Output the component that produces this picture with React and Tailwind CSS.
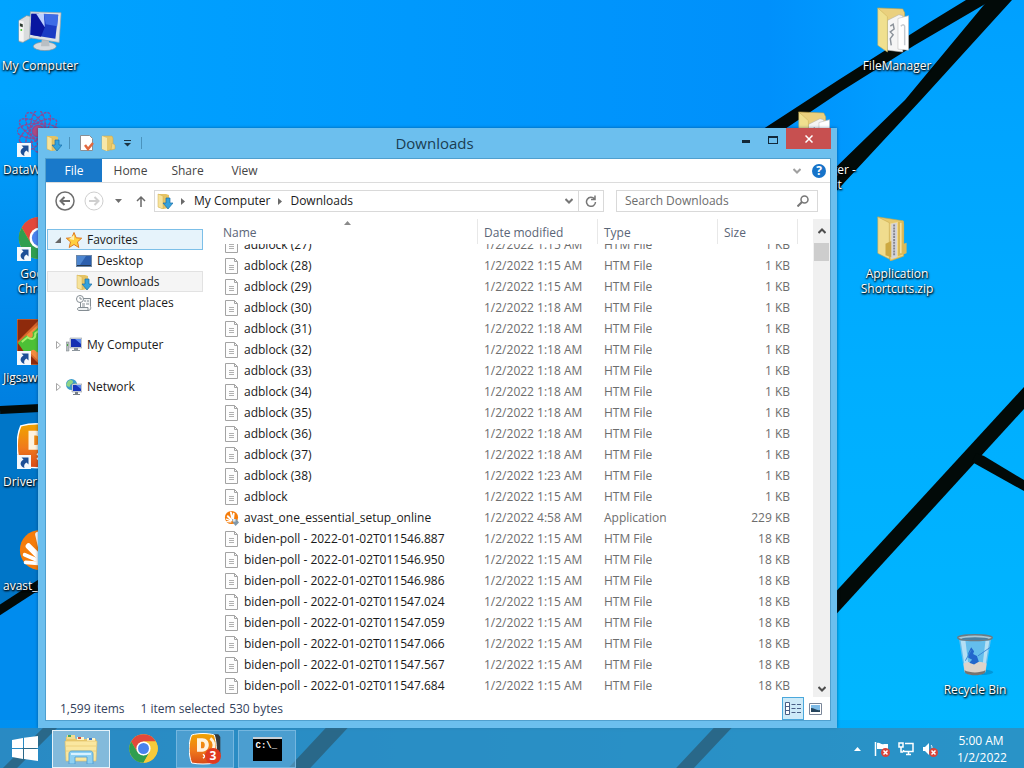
import { useEffect, useRef } from "react";

const adblockRows = [27, 28, 29, 30, 31, 32, 33, 34, 35, 36, 37, 38].map((n) => ({
  name: `adblock (${n})`,
  date: n < 30 ? "1/2/2022 1:15 AM" : n === 38 ? "1/2/2022 1:23 AM" : "1/2/2022 1:18 AM",
  type: "HTM File",
  size: "1 KB",
}));

const pollRows = [
  "546.887",
  "546.950",
  "546.986",
  "547.024",
  "547.059",
  "547.066",
  "547.567",
  "547.684",
].map((stamp) => ({
  name: `biden-poll - 2022-01-02T011${stamp}`,
  date: "1/2/2022 1:15 AM",
  type: "HTM File",
  size: "18 KB",
}));

const files = [
  ...adblockRows,
  { name: "adblock", date: "1/2/2022 1:15 AM", type: "HTM File", size: "1 KB" },
  {
    name: "avast_one_essential_setup_online",
    date: "1/2/2022 4:58 AM",
    type: "Application",
    size: "229 KB",
    app: true,
  },
  ...pollRows,
];

const Wallpaper = () => (
  <svg
    className="absolute inset-0 h-full w-full"
    viewBox="0 0 1024 768"
    preserveAspectRatio="none"
    aria-hidden="true"
  >
    <defs>
      <linearGradient id="sky" x1="0" y1="0" x2="1" y2="0">
        <stop offset="0" stopColor="#00a4ff" />
        <stop offset="0.4" stopColor="#0099fd" />
        <stop offset="0.75" stopColor="#0090fb" />
        <stop offset="0.86" stopColor="#009cff" />
        <stop offset="1" stopColor="#00a4ff" />
      </linearGradient>
      <linearGradient id="leftSide" x1="0" y1="0" x2="0" y2="1">
        <stop offset="0" stopColor="#00a0fe" />
        <stop offset="1" stopColor="#007fe0" />
      </linearGradient>
      <linearGradient id="rightSide" x1="0" y1="0" x2="0" y2="1">
        <stop offset="0" stopColor="#00a0ff" />
        <stop offset="0.5" stopColor="#00aeff" />
        <stop offset="1" stopColor="#00b8ff" />
      </linearGradient>
      <linearGradient id="bottomSide" x1="0" y1="0" x2="1" y2="0">
        <stop offset="0" stopColor="#0090f0" />
        <stop offset="1" stopColor="#00b4ff" />
      </linearGradient>
    </defs>
    <rect width="1024" height="768" fill="url(#sky)" />
    <rect y="100" width="60" height="310" fill="url(#leftSide)" />
    <polygon points="0,408 60,408 60,571 0,613" fill="#0076c8" />
    <polygon points="0,613 60,571 60,768 0,768" fill="#008cee" />
    <polygon points="1024,0 1008,0 830,190 830,768 1024,768" fill="url(#rightSide)" />
    <rect y="720" width="1024" height="48" fill="url(#bottomSide)" />
    <g fill="#020a08">
      <polygon points="760,131 840,79 930,22 966,0 992,0 915,45 840,92 782,131" />
      <polygon points="988,0 1012,0 921,100 830,198 830,173 905,100" />
      <polygon points="830,598 1024,387 1024,409 830,621" />
      <polygon points="976,453 984,456 1024,480 1024,491 972,462" />
    </g>
    <g stroke="#020a08" fill="none">
      <path d="M0 410 L60 407" strokeWidth="8" />
      <path d="M-5 613 L60 571" strokeWidth="9" />
      <path d="M0 778 L60 718" strokeWidth="10" />
      <path d="M290 778 L346 718" strokeWidth="16" />
      <path d="M670 784 L732 718" strokeWidth="13" />
    </g>
  </svg>
);

const ComputerIcon = ({ className }) => (
  <svg className={className} viewBox="0 0 48 48" aria-hidden="true">
    <path d="M2 14l8-5 5 1v22l-9 5-4-1z" fill="#d9dcdd" stroke="#8d9498" strokeWidth="0.7" />
    <path d="M2 14l5 1v21l-5-1z" fill="#f4f4f4" />
    <path d="M3 17l3 1v3l-3-1z" fill="#2d3a2f" />
    <circle cx="4.500" cy="24" r="1" fill="#49c42f" />
    <ellipse cx="29" cy="41" rx="12" ry="4.500" fill="#d7dbdf" stroke="#8d9498" strokeWidth="0.7" />
    <path d="M26 33h7l1 8h-9z" fill="#b9bfc4" />
    <path d="M14 5l32 1-2 31-31-5z" fill="#dfe3e6" stroke="#98a2a8" strokeWidth="0.7" />
    <path d="M15 7l28 1-3 25-26-4z" fill="#1a3cc4" />
    <path d="M15 7l8 0 6 14-4 10-11-2z" fill="#0916a0" />
    <path d="M20 7l8 0 1 14z" fill="#bcd0ff" />
    <path d="M28 7l15 1-1 12-12-2z" fill="#3d6ce6" />
  </svg>
);

const FolderIcon = ({ className, zip }) => (
  <svg className={className} viewBox="0 0 48 48" aria-hidden="true">
    {zip ? (
      <>
        <path d="M4 2l26 4 1 4v33l-14 5z" fill="#e6c96d" stroke="#c7a544" strokeWidth="0.6" />
        <path d="M16 9l14-3v36l-12 4z" fill="#f1dc93" />
        <path d="M18 9l6-1v36l-6 2z" fill="#d4d4da" />
        <path d="M21 10v32" stroke="#85858d" strokeWidth="2" strokeDasharray="2 1" />
        <path d="M25 7l6-1v24l3-1v11l-9 3z" fill="#dcb956" />
        <path d="M28 8v32" stroke="#f6e6a8" strokeWidth="1.500" />
        <path d="M4 2l12 6v38l-12-6z" fill="#f0dc8e" stroke="#c9aa50" strokeWidth="0.6" />
        <path d="M12 30l6-3v17l-6-2z" fill="#cda942" />
      </>
    ) : (
      <>
        <path d="M4 1l26 1 2 4v8H14z" fill="#ead07e" stroke="#c7a544" strokeWidth="0.6" />
        <path d="M14 14l12-6 4 1v38l-16-2z" fill="#f5f5f5" stroke="#b4b4b4" strokeWidth="0.6" />
        <path d="M25 12l11-3v36l-11-1z" fill="#fff" stroke="#bbb" strokeWidth="0.6" />
        <path d="M17 20l3-2 1 5-4 3 3 3-3 4 1 7" stroke="#8b929a" strokeWidth="1.500" fill="none" />
        <path d="M28 20c2-2 3-2 4 0v20" stroke="#c4c9cf" strokeWidth="1.500" fill="none" />
        <path d="M4 1l10 9v37L4 40z" fill="#f0e08f" stroke="#ceb55d" strokeWidth="0.6" />
      </>
    )}
  </svg>
);

const ShortcutArrow = () => (
  <svg className="absolute bottom-0 left-0 h-[14px] w-[14px]" viewBox="0 0 14 14" aria-hidden="true">
    <rect width="14" height="14" fill="#f4f8fc" />
    <path d="M4.500 2.500h7v7L9.500 7.500c-2 1-3 3-2 5.500C2.500 11 2.500 7 6.500 4.500z" fill="#1d4f96" />
  </svg>
);

const AtomIcon = () => (
  <svg className="h-full w-full" viewBox="0 0 48 48" fill="none" stroke="#8a4a98" strokeWidth="1.500" aria-hidden="true">
    {[0, 30, 60, 90, 120, 150].map((deg) => (
      <ellipse key={deg} cx="22" cy="21" rx="22" ry="8" strokeDasharray="3 1" transform={`rotate(${deg} 22 21)`} />
    ))}
    <circle cx="22" cy="21" r="6" fill="#b04a80" />
  </svg>
);

const ChromeIcon = ({ className }) => (
  <svg className={className} viewBox="0 0 48 48" aria-hidden="true">
    <circle cx="24" cy="24" r="22" fill="#f7ca3a" />
    <path d="M24 13h19.100A22 22 0 0 0 4.900 13L14.500 29.500z" fill="#e2483b" />
    <path d="M4.900 13A22 22 0 0 0 24 46l9.500-16.500L24 35l-9.500-5.500z" fill="#2f9e4f" />
    <path d="M24 46A22 22 0 0 0 43.100 13H24l9.500 16.500z" fill="#f7ca3a" />
    <circle cx="24" cy="24" r="11" fill="#fff" />
    <circle cx="24" cy="24" r="8.500" fill="#4a83ee" />
  </svg>
);

const JigsawIcon = () => (
  <svg className="h-full w-full" viewBox="0 0 48 48" aria-hidden="true">
    <rect width="48" height="48" fill="#8e2a0c" stroke="#e08a50" />
    <path d="M0 24L24 0l24 24-24 24z" fill="#d9662a" />
    <path d="M2 24L25 3l20 21-21 21z" fill="#f28b3e" />
    <path d="M1 25l9-8c4 5 8 2 6-3l6-5 14 14-15 12c-4-6-9-2-6 4l-3 2z" fill="#4cc036" />
    <path d="M5 24l6-5c5 4 9 1 8-4l4-3" stroke="#a9f06b" strokeWidth="2" fill="none" />
  </svg>
);

const DriverIcon = ({ className }) => (
  <svg className={className} viewBox="0 0 48 48" aria-hidden="true">
    <defs>
      <linearGradient id="driver" x1="0" y1="0" x2="0" y2="1">
        <stop offset="0" stopColor="#f0a400" />
        <stop offset="0.55" stopColor="#f07a1c" />
        <stop offset="1" stopColor="#d84a18" />
      </linearGradient>
    </defs>
    <path d="M32 2h12l3 4v26H34z" fill="#33393d" />
    <path
      d="M4 3C14 0 28 0 38 3c4 12 4 30 0 42-10 2-24 2-34 0C-1 32-1 14 4 3z"
      fill="url(#driver)"
      stroke="#fff"
      strokeWidth="1.500"
    />
    <path d="M12 8h8c13 0 13 20 0 20h-8zM18 13v10h2c5 0 5-10 0-10z" fill="#fff3df" fillRule="evenodd" />
    <path d="M32 8c7 5 7 15 1 20" stroke="#fff3df" strokeWidth="4" fill="none" />
    <path d="M21 32l3 3-3 3" stroke="#fff" strokeWidth="2" fill="none" />
  </svg>
);

const AvastIcon = ({ className }) => (
  <svg className={className} viewBox="0 0 48 48" aria-hidden="true">
    <circle cx="24" cy="24" r="21" fill="#f57c0a" />
    <g fill="none" stroke="#fff" strokeLinecap="round">
      <path d="M9 37l13 1" strokeWidth="4" />
      <path d="M8 29l14 6" strokeWidth="4" />
      <path d="M12 20l12 12" strokeWidth="6" />
      <path d="M22 8l5 22M31 12l-2 18" strokeWidth="6" />
    </g>
  </svg>
);

const RecycleBinIcon = () => (
  <svg className="h-full w-full" viewBox="0 0 48 48" aria-hidden="true">
    <ellipse cx="29" cy="43" rx="14" ry="3" fill="#0079b5" opacity="0.5" />
    <path d="M7 7h34l-6 36c-5 4-17 4-22 0z" fill="#6fbfea" opacity="0.9" />
    <path d="M9 10l5 32 4 1-4-33zM39 10l-5 32-3 1 4-33z" fill="#d5edf8" opacity="0.7" />
    <path d="M12 34c6-3 18-3 24 0l-1 8c-6 4-16 4-22 0z" fill="#ddd3ca" />
    <path d="M13 41c6 3 16 3 22 0l-1 3c-6 3-14 3-20 0z" fill="#77736f" />
    <path d="M17 23l3-6 3 4-1 3 4 2 2 6-5 3-5-2 3-3-4-2z" fill="#2267cc" />
    <path d="M14 31l6-11M27 26l13-9" stroke="#3c87d5" />
    <ellipse cx="24" cy="7" rx="18" ry="3" fill="#a8c8d6" stroke="#6c7b83" strokeWidth="1.500" />
    <ellipse cx="24" cy="8" rx="14" ry="1.500" fill="#4c7fa0" />
  </svg>
);

const DownloadsIcon = ({ className = "" }) => (
  <svg className={`h-4 w-4 shrink-0 ${className}`} viewBox="0 0 16 16" aria-hidden="true">
    <path d="M1 1h8l3 1v13l-6 1-5-2z" fill="#e5c364" />
    <path d="M1 1l5 2v13l-5-2z" fill="#f6e39c" stroke="#d0ae52" strokeWidth="0.5" />
    <path d="M9 5h4v5h3l-5 6-5-6h3z" fill="#35a2dc" stroke="#1a6fa8" strokeWidth="0.7" />
  </svg>
);

const SmallFolder = () => (
  <svg className="h-4 w-4" viewBox="0 0 16 16" aria-hidden="true">
    <path d="M1 1h10l1 2v11l-6 2-5-2z" fill="#e7c869" stroke="#cba649" strokeWidth="0.5" />
    <path d="M1 1l5 2v13l-5-2z" fill="#f7e7a8" />
    <path d="M11 8l3 2v4l-4 1z" fill="#f2d680" stroke="#cba649" strokeWidth="0.5" />
  </svg>
);

const PropertiesIcon = () => (
  <svg className="h-4 w-4" viewBox="0 0 16 16" aria-hidden="true">
    <path d="M1.500.500h9l3 3v12h-12z" fill="#fff" stroke="#8a8f94" />
    <path d="M6 10l3 4 5-6" stroke="#e2683e" strokeWidth="2.500" fill="none" />
  </svg>
);

const StarIcon = () => (
  <svg className="h-4 w-4" viewBox="0 0 16 16" aria-hidden="true">
    <path
      d="M8 .500l2.200 5.300 5.500.400-4.200 3.700 1.300 5.600L8 12.500l-4.800 3 1.300-5.600L.300 6.200l5.500-.400z"
      fill="#ffcf3f"
      stroke="#dd7a20"
      strokeLinejoin="round"
    />
    <path d="M8 3v5L3 7z" fill="#fff1b0" />
  </svg>
);

const DesktopIcon = () => (
  <svg className="h-4 w-4" viewBox="0 0 16 16" aria-hidden="true">
    <rect x="0.500" y="2.500" width="15" height="11" fill="#2b5fae" stroke="#6b87a8" />
    <path d="M1 3h9L4 12H1z" fill="#4d86d0" />
    <path d="M1 12.500h14" stroke="#24364d" />
  </svg>
);

const RecentIcon = () => (
  <svg className="h-4 w-4" viewBox="0 0 16 16" fill="none" stroke="#848d93" aria-hidden="true">
    <path d="M5 3.500h9.500v8M4.500 7v5.500M3 12.500h9v3H3c-2 0-2-3 0-3zM12 15.500c3 0 3-3 2.500-4" fill="#eef1f2" />
    <path d="M8 6h2M11 6h2M6 9h3M10 9h3M6 11h3" />
    <circle cx="4" cy="4" r="3.500" fill="#fff" />
    <path d="M4 2v2h2" />
  </svg>
);

const SmallComputer = () => (
  <svg className="h-4 w-4" viewBox="0 0 16 16" aria-hidden="true">
    <path d="M0 5h3v9H0z" fill="#b9bec2" stroke="#757d83" strokeWidth="0.5" />
    <path d="M1 7h1v2H1z" fill="#46a83c" />
    <path d="M4 1h12v10H4z" fill="#d5dadd" stroke="#87919a" strokeWidth="0.5" />
    <path d="M5 2h10v8H5z" fill="#1530b2" />
    <path d="M9 2h6v5z" fill="#5c8bf0" />
    <path d="M8 11h4v2h2v1H6v-1h2z" fill="#8c959c" />
  </svg>
);

const NetworkIcon = () => (
  <svg className="h-4 w-4" viewBox="0 0 16 16" aria-hidden="true">
    <circle cx="5.500" cy="5.500" r="5.500" fill="#3d9dcb" />
    <path d="M2 2c3-2 5-1 5 1S4 5 4 7 1 7 0 6zM7 5l3-1v5H7z" fill="#8fd486" />
    <path d="M6 5h10v8H6z" fill="#dbe0e5" stroke="#7c8791" strokeWidth="0.5" />
    <path d="M7 6h8v6H7z" fill="#1836bd" />
    <path d="M10 6h5v4z" fill="#5b88ec" />
    <path d="M9 13h3v2h2v1H7v-1h2z" fill="#777f86" />
  </svg>
);

const HtmIcon = () => (
  <svg className="h-4 w-[14px] shrink-0" viewBox="0 0 14 16" fill="none" aria-hidden="true">
    <path d="M.500.500h9l3 3v12h-12z" fill="#fdfdfd" stroke="#a3a3a3" />
    <path d="M9.500.500v3h3" stroke="#a3a3a3" />
    <path d="M4 7.500h5M4 9.500h5M4 11.500h5" stroke="#b0b0b0" />
  </svg>
);

const SetupIcon = () => (
  <span className="relative -ml-px h-4 w-[15px] shrink-0">
    <AvastIcon className="h-[15px] w-[15px]" />
    <svg className="absolute right-0 bottom-0 h-[7px] w-[7px]" viewBox="0 0 8 8" aria-hidden="true">
      <path d="M0 0h5l3 4-4 4-3-4z" fill="#8199ab" />
      <path d="M1 0h3v3H1z" fill="#dfe5ea" />
    </svg>
  </span>
);

const DesktopItem = ({ label, children, shortcut, left }) => (
  <button className="flex h-[104px] w-20 shrink-0 flex-col items-center pt-[7px]">
    <span className="relative block h-[46px] w-[46px] shrink-0">
      {children}
      {shortcut && <ShortcutArrow />}
    </span>
    <span
      className={`mt-[5px] w-full text-[12px] leading-[15px] text-white [text-shadow:1px_1px_2px_#000,0_1px_2px_#000] ${
        left ? "overflow-hidden pl-[3px] text-left whitespace-nowrap" : "text-center"
      }`}
    >
      {label}
    </span>
  </button>
);

const NavRow = ({ icon, label, top, open, state }) => (
  <button
    className={`flex h-[21px] w-full items-center border text-left text-[12px] text-[#1a1a1a] ${
      state === "focus"
        ? "border-[#7cbfe8] bg-[#e6f3fb]"
        : state === "current"
          ? "border-[#e2e2e2] bg-[#f5f5f5]"
          : "border-transparent"
    } ${top ? "pl-[7px]" : "pl-[28px]"}`}
  >
    {top && (
      <svg className="mr-1 h-[8px] w-[7px]" viewBox="0 0 7 8" aria-hidden="true">
        {open ? <path d="M6 1v6H0z" fill="#666" /> : <path d="M1.500.500l4 3.500-4 3.500z" fill="#fff" stroke="#a6a6a6" />}
      </svg>
    )}
    {icon}
    <span className="ml-[5px]">{label}</span>
  </button>
);

const TitleBar = () => (
  <header className="flex h-[30px] shrink-0 items-start pr-[6px]">
    <div className="flex h-full flex-1 items-center">
      <DownloadsIcon className="ml-2" />
      <span className="mx-[7px] h-3 w-px bg-[#4a93bd]" />
      <button aria-label="Properties" className="ml-[2px]">
        <PropertiesIcon />
      </button>
      <button aria-label="New folder" className="ml-[6px]">
        <SmallFolder />
      </button>
      <button aria-label="Customize Quick Access Toolbar" className="ml-[7px]">
        <svg className="h-2 w-[7px]" viewBox="0 0 7 8" aria-hidden="true">
          <path d="M0 1.500h7" stroke="#1c3442" />
          <path d="M0 4h7L3.500 7.500z" fill="#1c3442" />
        </svg>
      </button>
      <span className="ml-[10px] h-3 w-px bg-[#4a93bd]" />
    </div>
    <h1 className="text-[15px] leading-[30px] text-[#1b3d52]">Downloads</h1>
    <div className="flex flex-1 items-start justify-end">
      <button aria-label="Minimize" className="flex h-5 w-[27px] items-center justify-center">
        <span className="mt-[6px] h-[3px] w-2 bg-[#12293a]" />
      </button>
      <button aria-label="Maximize" className="flex h-5 w-[27px] items-center justify-center">
        <span className="mt-[3px] h-2 w-[10px] border border-t-2 border-[#12293a]" />
      </button>
      <button aria-label="Close" className="flex h-[21px] w-[45px] items-center justify-center bg-[#c75050]">
        <svg className="h-2 w-2" viewBox="0 0 8 8" stroke="#fff" strokeWidth="1.500" aria-hidden="true">
          <path d="M.500.500l7 7M7.500.500l-7 7" />
        </svg>
      </button>
    </div>
  </header>
);

const Crumb = ({ className }) => (
  <svg className={`h-[7px] w-1 ${className}`} viewBox="0 0 4 7" aria-hidden="true">
    <path d="M0 0l4 3.500L0 7z" fill="#6a6a6a" />
  </svg>
);

const Chevron = ({ className }) => (
  <svg className={className} viewBox="0 0 8 6" fill="none" stroke="currentColor" strokeWidth="2" aria-hidden="true">
    <path d="M.500 1L4 4.500 7.500 1" />
  </svg>
);

const AddressRow = () => (
  <div className="flex h-[36px] shrink-0 items-center pr-3 pl-[9px]">
    <button aria-label="Back">
      <svg className="h-5 w-5" viewBox="0 0 20 20" fill="none" stroke="#6e6e6e" aria-hidden="true">
        <circle cx="10" cy="10" r="9" strokeWidth="1.500" />
        <path d="M15 10H6M9.500 6l-4 4 4 4" strokeWidth="2" />
      </svg>
    </button>
    <button aria-label="Forward" className="ml-[9px]">
      <svg className="h-5 w-5" viewBox="0 0 20 20" fill="none" stroke="#cfcfcf" aria-hidden="true">
        <circle cx="10" cy="10" r="9" />
        <path d="M5 10h9M10.500 6l4 4-4 4" strokeWidth="2" />
      </svg>
    </button>
    <button aria-label="Recent locations" className="ml-[11px]">
      <svg className="h-2 w-[7px]" viewBox="0 0 7 8" aria-hidden="true">
        <path d="M0 2h7L3.500 6z" fill="#6e6e6e" />
      </svg>
    </button>
    <button aria-label="Up" className="ml-[14px]">
      <svg
        className="h-[13px] w-[10px]"
        viewBox="0 0 10 13"
        fill="none"
        stroke="#6a6a6a"
        strokeWidth="1.500"
        aria-hidden="true"
      >
        <path d="M5 12V2M1 6l4-4 4 4" />
      </svg>
    </button>
    <div className="ml-2 flex h-[22px] flex-1 items-center border border-[#d9d9d9] text-[12px] text-[#1a1a1a]">
      <DownloadsIcon className="ml-[2px]" />
      <Crumb className="ml-2" />
      <button className="ml-[9px]">My Computer</button>
      <Crumb className="ml-2" />
      <button className="ml-2">Downloads</button>
      <button aria-label="Previous locations" className="ml-auto flex h-full w-[19px] items-center justify-center">
        <Chevron className="h-[6px] w-2 text-[#777]" />
      </button>
      <button aria-label="Refresh" className="flex h-full w-[25px] items-center justify-center border-l border-[#d9d9d9]">
        <svg className="h-3 w-3" viewBox="0 0 12 12" fill="none" stroke="#777" strokeWidth="1.500" aria-hidden="true">
          <path d="M9.500 4A4.500 4.500 0 1 0 10.500 7M10 .500V4.500H6" />
        </svg>
      </button>
    </div>
    <label className="ml-3 flex h-[22px] w-[202px] items-center border border-[#d9d9d9] pr-2 pl-2">
      <input
        type="text"
        aria-label="Search Downloads"
        placeholder="Search Downloads"
        className="w-full min-w-0 flex-1 text-[12px] outline-none placeholder:text-[#6d6d6d]"
      />
      <svg className="h-3 w-3" viewBox="0 0 12 12" fill="none" stroke="#777" aria-hidden="true">
        <circle cx="7.500" cy="4.500" r="3.500" strokeWidth="1.500" />
        <path d="M5 7l-4.500 4.500" strokeWidth="2" />
      </svg>
    </label>
  </div>
);

const FileList = () => {
  const scroller = useRef(null);

  // Start partly scrolled so the first row sits under the header
  useEffect(() => {
    scroller.current.scrollTop = 10;
  }, []);

  return (
    <div ref={scroller} className="min-w-0 flex-1 overflow-hidden pl-[13px]">
      <table className="w-full table-fixed border-separate border-spacing-0 text-left text-[12px] leading-[15px] text-[#6d6d6d]">
        <colgroup>
          <col className="w-[260px]" />
          <col className="w-[120px]" />
          <col className="w-[120px]" />
          <col className="w-[80px]" />
          <col />
        </colgroup>
        <thead>
          <tr className="h-[25px] text-[#5a6577]">
            <th className="sticky top-0 z-10 bg-white pt-[2px] pb-0 pl-[6px] font-normal">
              <svg className="absolute top-[2px] left-[127px] h-[4px] w-[7px]" viewBox="0 0 7 4" aria-hidden="true">
                <path d="M0 4l3.500-4L7 4z" fill="#8a8a8a" />
              </svg>
              Name
            </th>
            <th className="sticky top-0 z-10 border-l border-[#e8e8e8] bg-white pt-[2px] pb-0 pl-[6px] font-normal">
              Date modified
            </th>
            <th className="sticky top-0 z-10 border-l border-[#e8e8e8] bg-white pt-[2px] pb-0 pl-[6px] font-normal">
              Type
            </th>
            <th className="sticky top-0 z-10 border-l border-[#e8e8e8] bg-white pt-[2px] pb-0 pl-[6px] font-normal">
              Size
            </th>
            <th className="sticky top-0 z-10 border-l border-[#e8e8e8] bg-white p-0" aria-hidden="true" />
          </tr>
        </thead>
        <tbody>
          {files.map((file) => (
            <tr key={file.name} className="h-[21px]">
              <td className="py-0 pl-2 text-[#1a1a1a]">
                <span className="flex h-[21px] items-center gap-[5px] whitespace-nowrap">
                  {file.app ? <SetupIcon /> : <HtmIcon />}
                  {file.name}
                </span>
              </td>
              <td className="py-0 pl-[7px] whitespace-nowrap">{file.date}</td>
              <td className="py-0 pl-[7px]">{file.type}</td>
              <td className="py-0 pr-[7px] text-right">{file.size}</td>
              <td />
            </tr>
          ))}
        </tbody>
      </table>
      <div className="h-6" />
    </div>
  );
};

const ExplorerWindow = () => (
  <section className="absolute top-32 right-[187px] bottom-0 left-[38px] flex flex-col bg-[#6cbfee] shadow-[0_0_3px_rgba(0,40,80,0.5)]">
    <TitleBar />
    <div className="mr-[6px] mb-[7px] ml-[7px] flex min-h-0 flex-1 flex-col border border-[#4f9fce] bg-white">
      <div className="flex h-[24px] shrink-0 items-center border-b border-[#dcdcdc] text-[12px] text-[#444]">
        <button className="h-full w-[56px] bg-[#1979ca] text-white">File</button>
        {["Home", "Share", "View"].map((tab) => (
          <button key={tab} className="h-full w-[57px]">
            {tab}
          </button>
        ))}
        <button aria-label="Expand the Ribbon" className="ml-auto">
          <Chevron className="h-[6px] w-2 text-[#a0a0a0]" />
        </button>
        <button
          aria-label="Help"
          className="mr-1 ml-[11px] h-[14px] w-[14px] rounded-full bg-[#1673c9] text-[12px] leading-[14px] font-bold text-white"
        >
          ?
        </button>
      </div>
      <AddressRow />
      <div className="flex min-h-0 flex-1">
        <nav className="flex w-[158px] shrink-0 flex-col pt-[10px] pr-px pl-px">
          <NavRow top open state="focus" icon={<StarIcon />} label="Favorites" />
          <NavRow icon={<DesktopIcon />} label="Desktop" />
          <NavRow state="current" icon={<DownloadsIcon />} label="Downloads" />
          <NavRow icon={<RecentIcon />} label="Recent places" />
          <div className="mt-[21px]">
            <NavRow top icon={<SmallComputer />} label="My Computer" />
          </div>
          <div className="mt-[21px]">
            <NavRow top icon={<NetworkIcon />} label="Network" />
          </div>
        </nav>
        <FileList />
        <div className="flex w-[17px] shrink-0 flex-col items-center bg-[#f0f0f0]">
          <button aria-label="Scroll up" className="flex h-6 w-full items-center justify-center">
            <Chevron className="h-[6px] w-2 rotate-180 text-[#4d4d4d]" />
          </button>
          <div className="h-[18px] w-[15px] bg-[#cdcdcd]" />
          <button aria-label="Scroll down" className="mt-auto flex h-[17px] w-full items-center justify-center">
            <Chevron className="h-[6px] w-2 text-[#4d4d4d]" />
          </button>
        </div>
      </div>
      <footer className="flex h-[23px] shrink-0 items-center pr-1 pl-[14px] text-[12px] text-[#33415c]">
        <span>1,599 items</span>
        <span className="ml-4">1 item selected</span>
        <span className="ml-1">530 bytes</span>
        <button
          aria-label="Details view"
          className="ml-auto flex h-full w-[22px] items-center justify-center border border-[#4aa8dc] bg-[#cdeaf8]"
        >
          <svg className="h-[13px] w-4" viewBox="0 0 16 13" fill="none" stroke="#4a5f86" aria-hidden="true">
            <path d="M.500.500h4v12h-4zM.500 4.500h4M.500 8.500h4" fill="#fff" />
            <path d="M6.500 2.500h4M12 2.500h4M6.500 6.500h4M12 6.500h4M6.500 10.500h4M12 10.500h4" />
          </svg>
        </button>
        <button aria-label="Large icons view" className="flex h-full w-[22px] items-center justify-center">
          <svg className="h-3 w-[13px]" viewBox="0 0 13 12" aria-hidden="true">
            <path d="M.500.500h12v11H.500z" fill="#fff" stroke="#7a8699" />
            <path d="M2 2h9v7H2z" fill="#7fbbe6" />
            <path d="M2 5c3 0 6 3 9 2v2H2z" fill="#25445c" />
          </svg>
        </button>
      </footer>
    </div>
  </section>
);

const TaskButton = ({ label, active, open, children }) => (
  <button
    aria-label={label}
    className={`relative flex h-[38px] w-[58px] items-center justify-center border ${
      active ? "border-[#e4f2fa] bg-[#a9cfe6]/70" : open ? "border-[#74b6df] bg-[#6db0dc]/50" : "border-transparent"
    }`}
  >
    {children}
  </button>
);

const RedCross = () => (
  <>
    <circle cx="11.500" cy="11.500" r="4.500" fill="#d9443a" />
    <path d="M9.500 9.500l4 4M13.500 9.500l-4 4" stroke="#fff" strokeWidth="1.500" />
  </>
);

const Taskbar = () => (
  <footer className="relative flex h-10 shrink-0 items-center bg-[#3788b4]/75 pt-px">
    <button aria-label="Start" className="mr-[2px] flex h-full w-[50px] items-center justify-center">
      <svg className="h-[25px] w-[26px]" viewBox="0 0 26 25" fill="#fff" aria-hidden="true">
        <path d="M0 4l11-2v10H0zM12 1.800L26 0v12H12zM0 13h11v10L0 21zM12 13h14v12l-14-2z" />
      </svg>
    </button>
    <div className="flex gap-1">
      <TaskButton label="File Explorer" active>
        <svg className="h-[30px] w-[34px]" viewBox="0 0 34 30" aria-hidden="true">
          <path d="M2 3h9l1 2h20v22H2z" fill="#e9c96b" />
          <path d="M3 1h8v4H3z" fill="#f3dd8f" />
          <path d="M13 3h7v3h-7zM23 4h8v3h-8z" fill="#fff5c9" />
          <path d="M4 1h3v2H4z" fill="#45a85c" />
          <path d="M14 3h3v2h-3z" fill="#d15442" />
          <path d="M25 4h3v2h-3z" fill="#4179c4" />
          <path d="M1 7h32l-1 20H2z" fill="#fae7a0" stroke="#dfbd62" strokeWidth="0.6" />
          <path d="M2 12h30M2 17h30" stroke="#ecd07c" />
          <path
            d="M5 30V20c0-2 1-3 3-3h18c2 0 3 1 3 3v10h-6v-7H11v7z"
            fill="#8ed0f2"
            stroke="#4a9bd0"
            strokeWidth="0.8"
          />
          <path d="M7 20h20" stroke="#d9f2ff" strokeWidth="2" />
        </svg>
      </TaskButton>
      <TaskButton label="Google Chrome">
        <ChromeIcon className="h-[31px] w-[31px]" />
      </TaskButton>
      <TaskButton label="Driver updater" open>
        <DriverIcon className="h-8 w-8" />
        <span className="absolute right-3 bottom-[3px] h-4 w-4 rounded-full bg-[#e03a20] text-center text-[12px] leading-4 font-bold text-white">
          3
        </span>
      </TaskButton>
      <TaskButton label="Command Prompt" open>
        <span className="block h-6 w-[29px] border-t-2 border-[#c9d0d6] bg-black pl-[3px] text-left font-['Liberation_Mono',monospace] text-[9px] leading-[14px] font-bold text-white">
          C:\_
        </span>
      </TaskButton>
    </div>
    <div className="ml-auto flex items-center">
      <button aria-label="Show hidden icons">
        <svg className="h-[5px] w-[7px]" viewBox="0 0 7 5" aria-hidden="true">
          <path d="M0 5l3.500-4L7 5z" fill="#fff" />
        </svg>
      </button>
      <button aria-label="Action Center" className="ml-[13px]">
        <svg className="h-4 w-4" viewBox="0 0 16 16" aria-hidden="true">
          <path d="M1.500 1v14" stroke="#fff" strokeWidth="1.500" />
          <path d="M3 2c3-1 4 2 7 1h4v6c-3 1-5-1-7-1H3z" fill="#fff" />
          <RedCross />
        </svg>
      </button>
      <button aria-label="Network" className="ml-2">
        <svg className="h-4 w-4" viewBox="0 0 16 16" fill="none" stroke="#fff" strokeWidth="1.500" aria-hidden="true">
          <path d="M7 2.500h8v8H5.500V9M8 13.500h5M10.500 11v3" />
          <path d="M1 2h4v4H1zM3 6v5h2" />
        </svg>
      </button>
      <button aria-label="Volume" className="ml-2">
        <svg className="h-4 w-4" viewBox="0 0 16 16" aria-hidden="true">
          <path d="M1 6h2l4-4v12l-4-4H1z" fill="#fff" />
          <path d="M9 4c1 1 1 2 1 3" stroke="#fff" fill="none" />
          <RedCross />
        </svg>
      </button>
      <div className="mr-[19px] ml-[19px] w-[48px] text-center text-[12px] leading-[17px] whitespace-nowrap text-white">
        <div>5:00 AM</div>
        <div>1/2/2022</div>
      </div>
    </div>
  </footer>
);

const App = () => {
  return (
    <div className="relative flex h-screen flex-col overflow-hidden font-['Open_Sans','Noto_Sans',sans-serif]">
      <Wallpaper />
      <main className="relative min-h-0 flex-1">
        <div className="absolute top-0 left-0 flex flex-col">
          <DesktopItem label="My Computer">
            <ComputerIcon className="h-full w-full" />
          </DesktopItem>
          <DesktopItem label="DataW" shortcut left>
            <AtomIcon />
          </DesktopItem>
          <DesktopItem label="Google Chrome" shortcut>
            <ChromeIcon className="h-full w-full" />
          </DesktopItem>
          <DesktopItem label="Jigsaw" shortcut left>
            <JigsawIcon />
          </DesktopItem>
          <DesktopItem label="Driver" shortcut left>
            <DriverIcon className="h-full w-full" />
          </DesktopItem>
          <DesktopItem label="avast_one" left>
            <AvastIcon className="h-full w-full" />
          </DesktopItem>
        </div>
        <div className="absolute top-[104px] right-[166px]">
          <DesktopItem label="FileManager - Shortcut" shortcut>
            <FolderIcon className="h-full w-full" />
          </DesktopItem>
        </div>
        <div className="absolute top-0 right-[87px] flex flex-col gap-[104px]">
          <DesktopItem label="FileManager">
            <FolderIcon className="h-full w-full" />
          </DesktopItem>
          <DesktopItem label="Application Shortcuts.zip">
            <FolderIcon zip className="h-full w-full" />
          </DesktopItem>
        </div>
        <div className="absolute right-[9px] bottom-0">
          <DesktopItem label="Recycle Bin">
            <RecycleBinIcon />
          </DesktopItem>
        </div>
        <ExplorerWindow />
      </main>
      <Taskbar />
    </div>
  );
};

export default App;
